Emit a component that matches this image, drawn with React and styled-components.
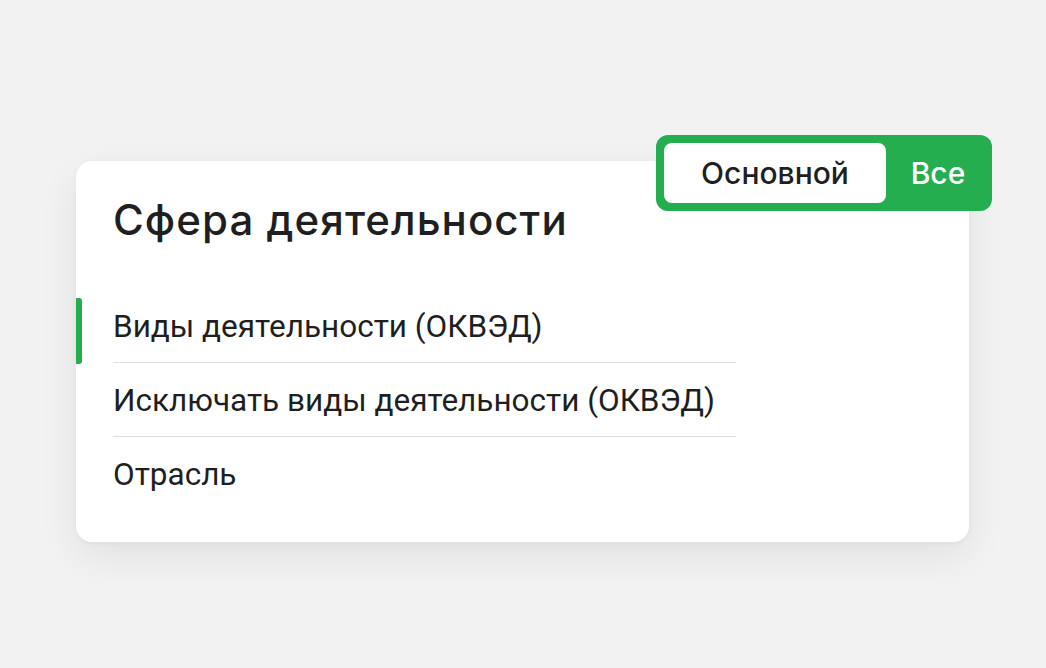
import styled, { createGlobalStyle } from 'styled-components';

const items = [
  { label: 'Виды деятельности (ОКВЭД)', active: true },
  { label: 'Исключать виды деятельности (ОКВЭД)' },
  { label: 'Отрасль' },
];

function App() {
  return (
    <>
      <GlobalStyle />
      <Page>
        <Card>
          <Toggle>
            <ToggleOption $selected>Основной</ToggleOption>
            <ToggleOption>Все</ToggleOption>
          </Toggle>
          <Title>Сфера деятельности</Title>
          <List>
            {items.map((item) => (
              <Item key={item.label} $active={item.active}>
                {item.label}
              </Item>
            ))}
          </List>
        </Card>
      </Page>
    </>
  );
}

const GlobalStyle = createGlobalStyle`
  html, body {
    margin: 0;
    padding: 0;
    background: #f2f2f2;
  }

  body {
    font-family: Inter, Roboto, 'Noto Sans', sans-serif;
    color: #1f1f1f;
  }
`;

const Page = styled.div`
  width: 1046px;
  height: 668px;
  padding: 161px 0 0 76px;
  box-sizing: border-box;
`;

const Card = styled.div`
  position: relative;
  width: 893px;
  height: 381px;
  box-sizing: border-box;
  padding: 35px 0 0 37px;

  background: #fff;
  border-radius: 16px;
  box-shadow: 0 14px 40px rgba(0, 0, 0, 0.07), 0 2px 6px rgba(0, 0, 0, 0.04);
`;

const Toggle = styled.div`
  position: absolute;
  top: -26px;
  left: 580px;

  display: flex;
  align-items: center;

  width: 336px;
  height: 76px;
  padding: 8px;
  box-sizing: border-box;

  background: #24ae4f;
  border-radius: 12px;
`;

const ToggleOption = styled.div`
  display: flex;
  align-items: center;
  justify-content: center;

  height: 100%;
  flex: ${({ $selected }) => ($selected ? '0 0 222px' : '1')};
  padding-left: ${({ $selected }) => ($selected ? '0' : '6px')};

  background: ${({ $selected }) => ($selected ? '#fff' : 'transparent')};
  border-radius: 8px;
  color: ${({ $selected }) => ($selected ? '#1f1f1f' : '#fff')};

  font-size: 30px;
  font-weight: 500;
`;

const Title = styled.h2`
  margin: 0 0 45px;

  font-size: 42px;
  font-weight: 500;
  line-height: 48px;
  letter-spacing: 1.05px;
`;

const List = styled.ul`
  width: 623px;
  margin: 0;
  padding: 0;
  list-style: none;
`;

const Item = styled.li`
  position: relative;
  display: flex;
  align-items: center;

  height: 74px;
  padding-top: 1px;
  box-sizing: border-box;
  border-bottom: 1px solid #dedede;

  font-family: Roboto, 'Noto Sans', sans-serif;
  font-size: 31.5px;
  font-weight: 400;

  &:last-child {
    border-bottom: none;
  }

  &::before {
    content: '';
    display: ${({ $active }) => ($active ? 'block' : 'none')};
    position: absolute;
    left: -37px;
    top: 9px;
    width: 6px;
    height: 66px;
    border-radius: 0 3px 3px 0;
    background: #24ae4f;
  }
`;

export default App;
